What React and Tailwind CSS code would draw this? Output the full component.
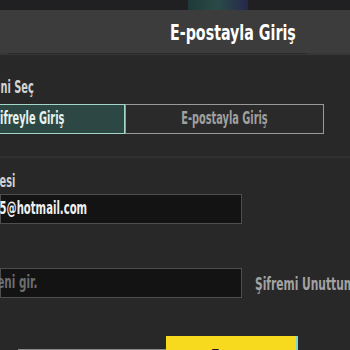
import React from "react";

const F = { fontFamily: '"DejaVu Sans Condensed", "DejaVu Sans", sans-serif' };

function RightText({ end, className, children }) {
  return (
    <div className="flex shrink-0 justify-end whitespace-nowrap" style={{ width: end }}>
      <span className={"inline-block origin-right " + className} style={F}>
        {children}
      </span>
    </div>
  );
}

export default function App() {
  return (
    <div className="w-[350px] h-[350px] overflow-hidden bg-[#282828]">
      {/* top strip with background art */}
      <div className="h-[10px] bg-[#202022] flex">
        <div className="ml-[188px] w-[60px] h-full bg-gradient-to-r from-[#1f3a38] via-[#2a4a48] to-[#25274a]" />
      </div>
      {/* header */}
      <div className="h-[43px] bg-[#3c3c3c] flex items-center">
        <span
          className="inline-block ml-[170px] mt-[1px] text-[22px] font-bold text-white scale-x-[0.72] origin-left whitespace-nowrap"
          style={F}
        >
          E-postayla Giriş
        </span>
      </div>
      <div className="h-[2px] bg-[#363636] flex">
        <div className="ml-[8px] w-[298px] h-[1px] bg-[#2a2a2a]" />
      </div>
      <div className="h-[2px] bg-[#2a2a2a]" />

      {/* label */}
      <div className="mt-[21px] h-[20px] flex items-center">
        <RightText end={34} className="text-[17px] font-bold text-[#d4d4d4] scale-x-[0.64]">
          Giriş Yöntemini Seç
        </RightText>
      </div>

      {/* tabs */}
      <div className="mt-[6px] flex h-[30px] ml-[-74px]">
        <div className="w-[199px] shrink-0 h-full border border-[#a3d6c6] bg-[#2d4844] flex items-center justify-center">
          <span className="inline-block ml-[6px] text-[17px] font-bold text-[#e6f2ee] scale-x-[0.64] whitespace-nowrap" style={F}>
            Şifreyle Giriş
          </span>
        </div>
        <div className="w-[199px] shrink-0 h-full border border-[#9a9a9a] bg-[#2a2a2a] flex items-center justify-center">
          <span className="inline-block text-[17px] font-bold text-[#a0a0a0] scale-x-[0.64] whitespace-nowrap" style={F}>
            E-postayla Giriş
          </span>
        </div>
      </div>

      {/* separator */}
      <div className="mt-[22px] h-[2px] bg-[#303030]" />

      {/* email label */}
      <div className="mt-[15px] h-[18px] flex items-center">
        <RightText end={15} className="text-[17px] font-bold text-[#d0d0d0] scale-x-[0.64]">
          E-posta Adresi
        </RightText>
      </div>

      {/* email input */}
      <div className="mt-[3px] h-[30px] w-[242px] border border-[#4e4e4e] bg-[#131313] flex items-center">
        <RightText end={86} className="text-[17px] font-bold text-[#f0f0f0] scale-x-[0.66]">
          ornek2005@hotmail.com
        </RightText>
      </div>

      {/* password row */}
      <div className="mt-[44px] h-[30px] flex items-center">
        <div className="h-full w-[242px] shrink-0 border border-[#4e4e4e] bg-[#131313] flex items-center">
          <RightText end={36} className="text-[17px] font-bold text-[#6e6e6e] scale-x-[0.68]">
            Şifreni gir.
          </RightText>
        </div>
        <span
          className="inline-block shrink-0 ml-[13px] text-[18px] font-bold text-[#a2a2a2] scale-x-[0.66] origin-left whitespace-nowrap"
          style={F}
        >
          Şifremi Unuttum?
        </span>
      </div>

      {/* bottom buttons */}
      <div className="mt-[38px] flex items-start">
        <div className="ml-[18px] mt-[13px] w-[148px] shrink-0 h-[20px] border-t border-l border-[#8a8a8a] bg-[#2a2a2a]" />
        <div className="w-[132px] shrink-0 h-[30px] bg-[#f7da1e] border-r-[2px] border-[#7fd8cc] flex justify-center">
          <span className="inline-block mt-[8px] text-[17px] font-bold text-[#1a1a1a] scale-x-[0.64]" style={F}>
            Tamam
          </span>
        </div>
      </div>
    </div>
  );
}
